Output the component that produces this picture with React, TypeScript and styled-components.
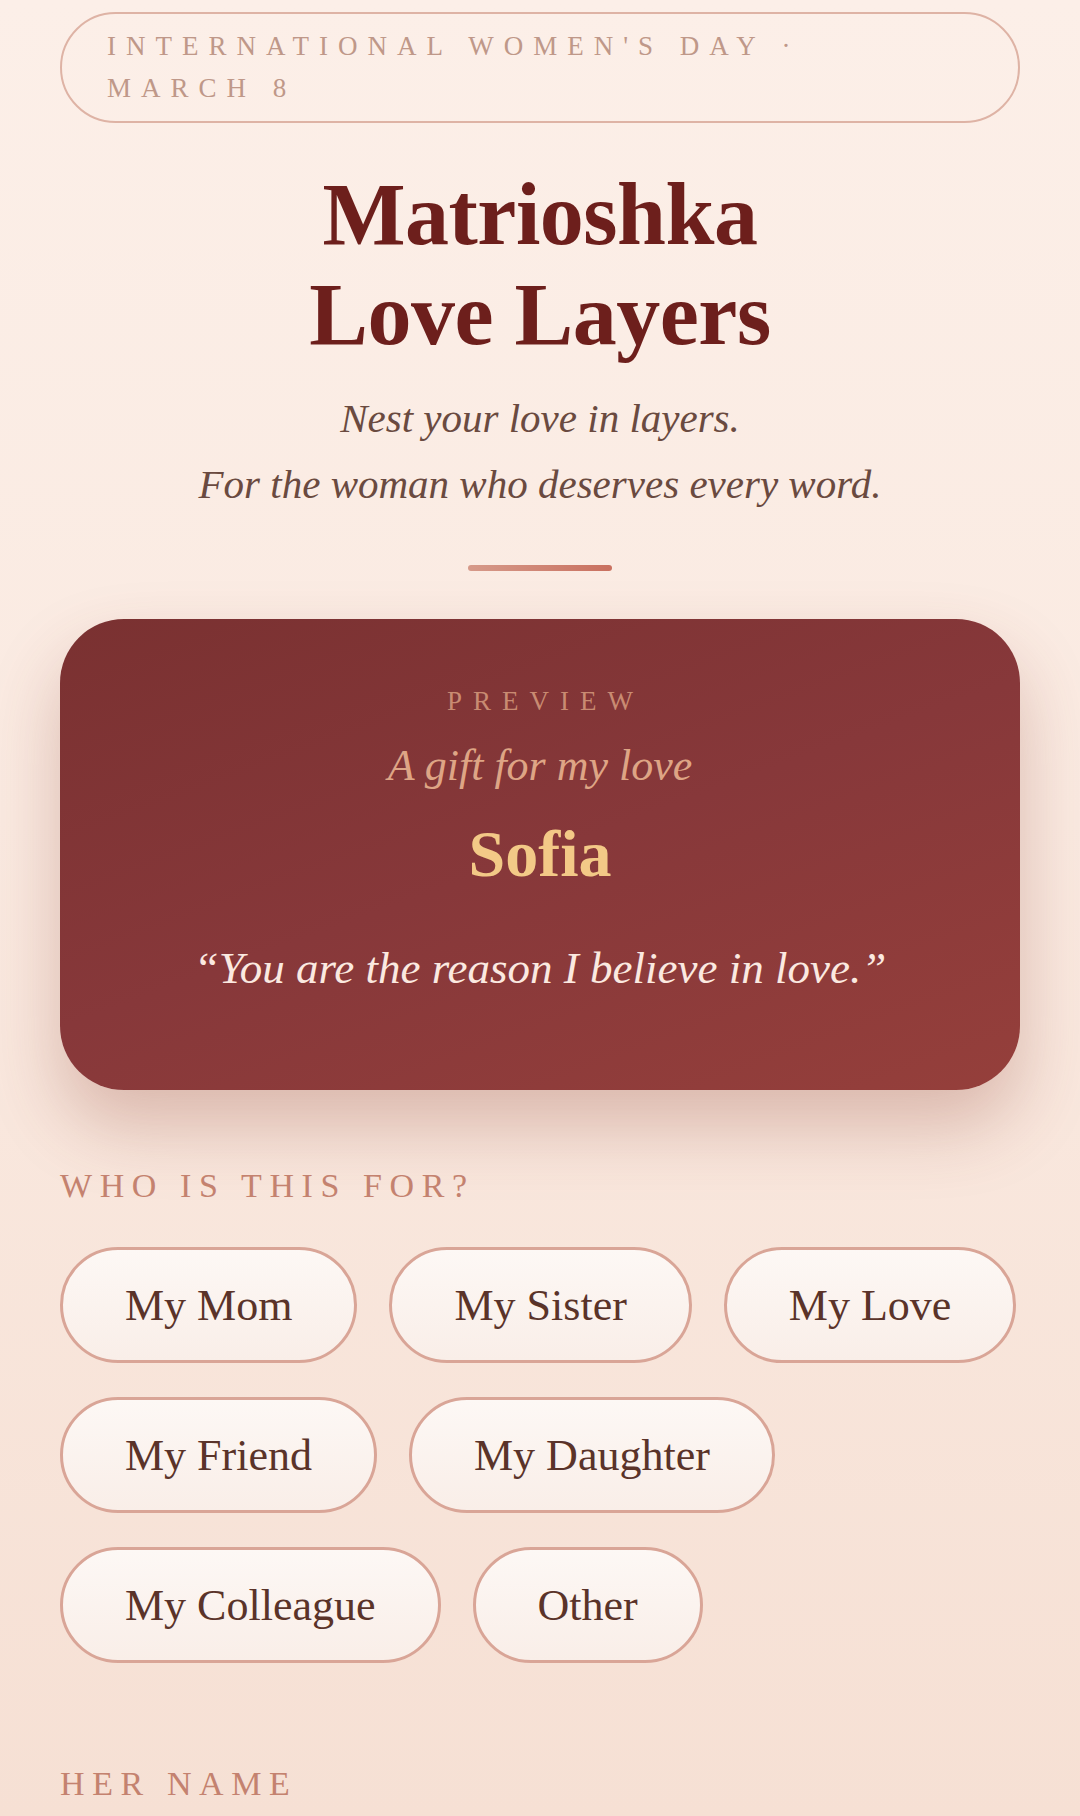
import React from 'react'
import styled, { createGlobalStyle } from 'styled-components'

const GlobalStyle = createGlobalStyle`
    html, body {
        margin: 0;
        padding: 0;
    }
    body {
        min-height: 1816px;
        background: linear-gradient(180deg, #fcefe8 0%, #faeae1 45%, #f6e0d4 100%);
        font-family: "Liberation Serif", "DejaVu Serif", serif;
        -webkit-font-smoothing: antialiased;
    }
`

const Page = styled.main`
    display: flex;
    flex-direction: column;
    padding: 12px 60px 0;
`

const Badge = styled.div`
    border: 2px solid #deb3a5;
    border-radius: 999px;
    padding: 11px 60px 12px 45px;
    font-size: 27px;
    line-height: 42px;
    letter-spacing: 10px;
    color: #bf9889;
    text-transform: uppercase;
`

const Title = styled.h1`
    margin: 42px 0 0;
    text-align: center;
    font-size: 88px;
    line-height: 100px;
    font-weight: 700;
    color: #6d1f1c;
    letter-spacing: -0.5px;
`

const Tagline = styled.p`
    margin: 20px 0 0;
    text-align: center;
    font-style: italic;
    font-size: 41px;
    line-height: 66px;
    color: #6a4a40;
`

const Divider = styled.div`
    align-self: center;
    width: 144px;
    height: 6px;
    margin-top: 48px;
    border-radius: 3px;
    background: linear-gradient(90deg, #d69a8a, #c9705f);
`

const PreviewCard = styled.section`
    margin-top: 48px;
    border-radius: 64px;
    padding: 66px 40px 93px;
    background: linear-gradient(160deg, #7a3131 0%, #87383a 50%, #953f3b 100%);
    box-shadow: 0 36px 70px rgba(140, 60, 45, 0.28);
    display: flex;
    flex-direction: column;
    align-items: center;
    text-align: center;
`

const Eyebrow = styled.div`
    font-size: 27px;
    line-height: 1.2;
    letter-spacing: 11px;
    margin-right: -11px;
    color: #c98b72;
`

const GiftLine = styled.div`
    margin-top: 20px;
    font-style: italic;
    font-size: 44px;
    line-height: 1.3;
    color: #dea585;
`

const Name = styled.div`
    margin-top: 19px;
    font-size: 66px;
    line-height: 1.2;
    font-weight: 700;
    color: #f3c987;
`

const Quote = styled.blockquote`
    margin: 46px 0 0;
    font-style: italic;
    font-size: 45px;
    line-height: 1.3;
    color: #fbe9e0;
`

const SectionLabel = styled.h2<{ gap: number }>`
    margin: ${({ gap }) => gap}px 0 0;
    font-size: 34px;
    line-height: 1.2;
    font-weight: 400;
    letter-spacing: 7.6px;
    color: #c4826f;
    text-transform: uppercase;
`

const ChipGrid = styled.div`
    display: flex;
    flex-wrap: wrap;
    gap: 34px 32px;
    margin-top: 40px;
`

const Chip = styled.button`
    box-sizing: border-box;
    height: 116px;
    padding: 0 62px;
    border: 3px solid #d9a597;
    border-radius: 999px;
    background: linear-gradient(180deg, #fdf8f5 0%, #f9eee8 100%);
    font-family: "Liberation Serif", "DejaVu Serif", serif;
    font-size: 44px;
    color: #5a3329;
    display: flex;
    align-items: center;
    cursor: pointer;
`

const recipients = ['My Mom', 'My Sister', 'My Love', 'My Friend', 'My Daughter', 'My Colleague', 'Other']

const App: React.FunctionComponent = () => {
    return (
        <>
            <GlobalStyle />
            <Page>
                <Badge>International Women's Day · March 8</Badge>

                <Title>
                    Matrioshka
                    <br />
                    Love Layers
                </Title>

                <Tagline>
                    Nest your love in layers.
                    <br />
                    For the woman who deserves every word.
                </Tagline>

                <Divider />

                <PreviewCard>
                    <Eyebrow>PREVIEW</Eyebrow>
                    <GiftLine>A gift for my love</GiftLine>
                    <Name>Sofia</Name>
                    <Quote>&ldquo;You are the reason I believe in love.&rdquo;</Quote>
                </PreviewCard>

                <SectionLabel gap={76}>Who is this for?</SectionLabel>
                <ChipGrid>
                    {recipients.map(item => (
                        <Chip key={item}>{item}</Chip>
                    ))}
                </ChipGrid>

                <SectionLabel gap={101}>Her name</SectionLabel>
            </Page>
        </>
    )
}

export default App
